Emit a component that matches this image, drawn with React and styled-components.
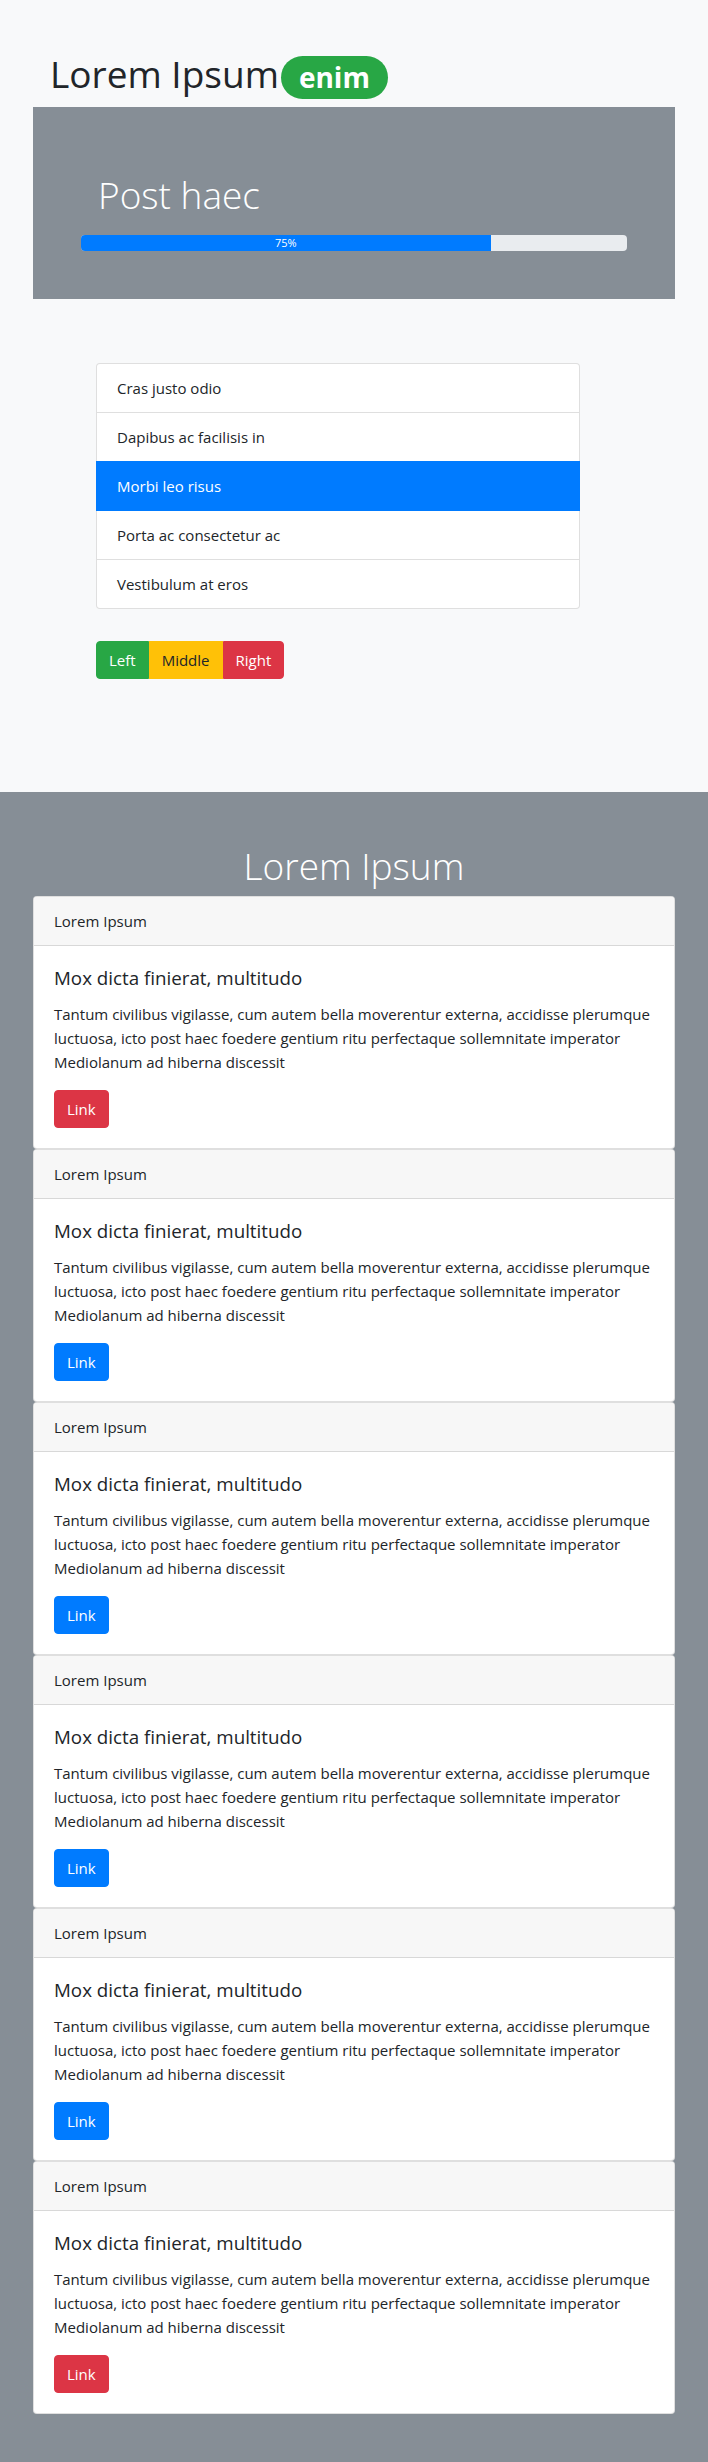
import React from "react";
import styled, { createGlobalStyle } from "styled-components";

const GlobalStyle = createGlobalStyle`
  html, body {
    margin: 0;
    padding: 0;
  }
  body {
    font-family: "Open Sans", "Noto Sans", "Liberation Sans", sans-serif;
    font-size: 15px;
    line-height: 24px;
    color: #212529;
    background: #868e96;
  }
  * {
    box-sizing: border-box;
  }
`;

const colors = {
  primary: "#007bff",
  success: "#28a745",
  warning: "#ffc107",
  danger: "#dc3545",
  gray: "#868e96",
  light: "#f8f9fa",
  dark: "#212529",
};

const TopSection = styled.section`
  background: ${colors.light};
  padding: 50px 33px 113px;
`;

const Title = styled.h1`
  margin: 0 0 8px 17px;
  font-size: 37px;
  line-height: 48px;
  font-weight: 400;
  color: ${colors.dark};
`;

const Badge = styled.span`
  display: inline-block;
  margin-left: 2px;
  padding: 7.5px 18px;
  font-size: 28px;
  line-height: 1;
  font-weight: 700;
  color: #fff;
  background: ${colors.success};
  border-radius: 10rem;
  vertical-align: baseline;
`;

const Jumbotron = styled.div`
  background: ${colors.gray};
  padding: 48px;
`;

const JumboTitle = styled.h1`
  margin: 0;
  padding-left: 17px;
  font-size: 37px;
  line-height: 80px;
  font-weight: 300;
  color: #fff;
`;

const Progress = styled.div`
  display: flex;
  height: 16px;
  overflow: hidden;
  background: #e9ecef;
  border-radius: 4px;
`;

const ProgressBar = styled.div`
  display: flex;
  align-items: center;
  justify-content: center;
  background: ${colors.primary};
  color: #fff;
  font-size: 11px;
  line-height: 16px;
`;

const Content = styled.div`
  margin: 64px 0 0 63px;
  width: 484px;
`;

const ListGroup = styled.ul`
  list-style: none;
  margin: 0;
  padding: 0;
  display: flex;
  flex-direction: column;
`;

const ListItem = styled.li`
  padding: 12px 20px;
  line-height: 24px;
  background: ${(p) => (p.$active ? colors.primary : "#fff")};
  color: ${(p) => (p.$active ? "#fff" : colors.dark)};
  border: 1px solid ${(p) => (p.$active ? colors.primary : "rgba(0,0,0,.125)")};
  margin-bottom: -1px;
  position: relative;
  z-index: ${(p) => (p.$active ? 2 : 1)};

  &:first-child {
    border-top-left-radius: 4px;
    border-top-right-radius: 4px;
  }
  &:last-child {
    margin-bottom: 0;
    border-bottom-left-radius: 4px;
    border-bottom-right-radius: 4px;
  }
`;

const ButtonGroup = styled.div`
  display: flex;
  width: max-content;
  margin-top: 32.5px;
`;

const GroupButton = styled.button`
  font-family: inherit;
  font-size: 15px;
  line-height: 24px;
  padding: 6px 12px;
  border: 1px solid ${(p) => p.$bg};
  background: ${(p) => p.$bg};
  color: ${(p) => p.$fg};
  border-radius: 0;
  cursor: pointer;

  &:first-child {
    border-radius: 4px 0 0 4px;
  }
  &:last-child {
    border-radius: 0 4px 4px 0;
  }
`;

const BottomSection = styled.section`
  background: ${colors.gray};
  padding: 50px 33px 48px;
`;

const SectionTitle = styled.h1`
  margin: 0 0 6px;
  text-align: center;
  font-size: 37px;
  line-height: 48px;
  font-weight: 300;
  color: #fff;
`;

const Card = styled.div`
  display: flex;
  flex-direction: column;
  background: #fff;
  border: 1px solid rgba(0, 0, 0, 0.125);
  border-radius: 4px;
  overflow: hidden;
`;

const CardHeader = styled.div`
  padding: 12px 20px;
  line-height: 24px;
  background: #f7f7f7;
  border-bottom: 1px solid rgba(0, 0, 0, 0.125);
`;

const CardBody = styled.div`
  padding: 20px;
`;

const CardTitle = styled.h5`
  margin: 0 0 12px;
  font-size: 18.75px;
  line-height: 24px;
  font-weight: 400;
`;

const CardText = styled.p`
  margin: 0 0 16px;
  line-height: 24px;
`;

const LinkButton = styled.a`
  display: inline-block;
  padding: 6px 12px;
  line-height: 24px;
  border: 1px solid ${(p) => p.$bg};
  border-radius: 4px;
  background: ${(p) => p.$bg};
  color: #fff;
  text-decoration: none;
`;

const items = [
  "Cras justo odio",
  "Dapibus ac facilisis in",
  "Morbi leo risus",
  "Porta ac consectetur ac",
  "Vestibulum at eros",
];

const cards = ["danger", "primary", "primary", "primary", "primary", "danger"];

const text =
  "Tantum civilibus vigilasse, cum autem bella moverentur externa, accidisse plerumque luctuosa, icto post haec foedere gentium ritu perfectaque sollemnitate imperator Mediolanum ad hiberna discessit";

export default function App() {
  const progress = 75;
  return (
    <>
      <GlobalStyle />
      <TopSection>
        <Title>
          Lorem Ipsum<Badge>enim</Badge>
        </Title>
        <Jumbotron>
          <JumboTitle>Post haec</JumboTitle>
          <Progress>
            <ProgressBar style={{ width: `${progress}%` }}>{progress}%</ProgressBar>
          </Progress>
        </Jumbotron>
        <Content>
          <ListGroup>
            {items.map((item, i) => (
              <ListItem key={item} $active={i === 2}>
                {item}
              </ListItem>
            ))}
          </ListGroup>
          <ButtonGroup>
            <GroupButton $bg={colors.success} $fg="#fff">Left</GroupButton>
            <GroupButton $bg={colors.warning} $fg={colors.dark}>Middle</GroupButton>
            <GroupButton $bg={colors.danger} $fg="#fff">Right</GroupButton>
          </ButtonGroup>
        </Content>
      </TopSection>
      <BottomSection>
        <SectionTitle>Lorem Ipsum</SectionTitle>
        {cards.map((variant, i) => (
          <Card key={i}>
            <CardHeader>Lorem Ipsum</CardHeader>
            <CardBody>
              <CardTitle>Mox dicta finierat, multitudo</CardTitle>
              <CardText>{text}</CardText>
              <LinkButton href="#" $bg={colors[variant]}>
                Link
              </LinkButton>
            </CardBody>
          </Card>
        ))}
      </BottomSection>
    </>
  );
}
